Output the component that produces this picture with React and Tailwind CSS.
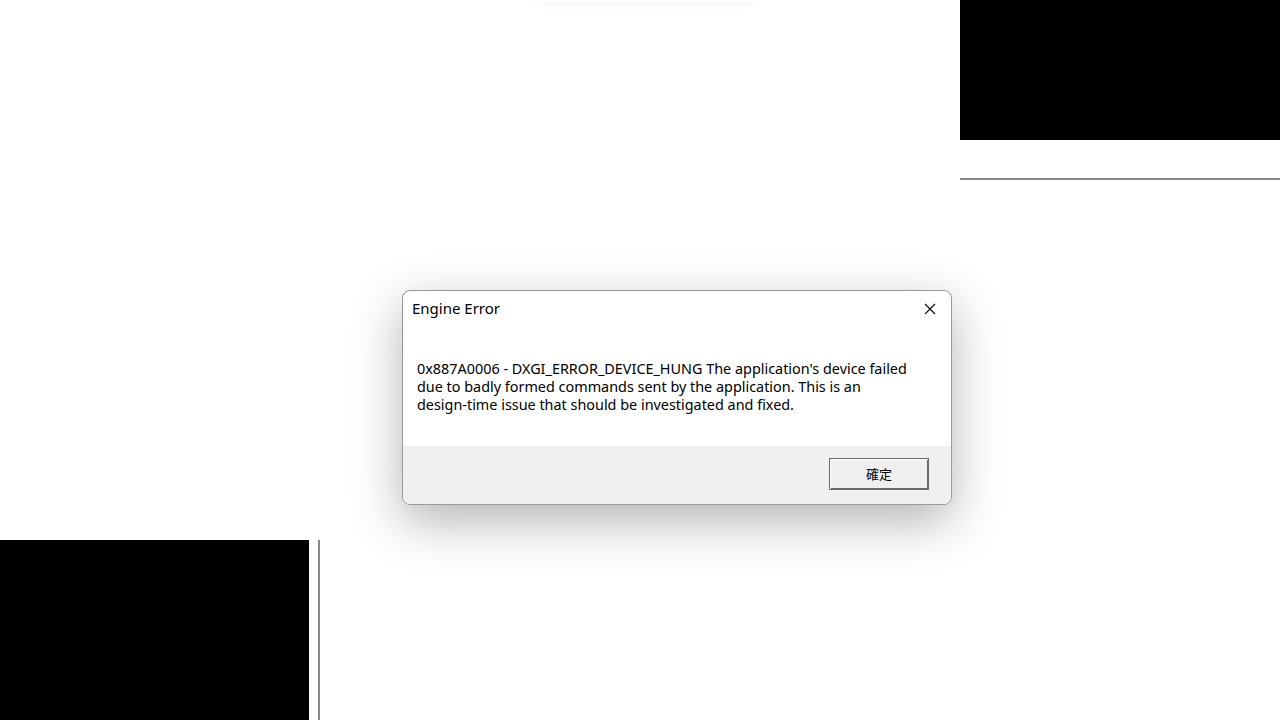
export default function App() {
  const font = { fontFamily: '"Noto Sans", "Noto Sans CJK TC", sans-serif' };

  return (
    <div className="relative w-[1280px] h-[720px] overflow-hidden bg-white" style={font}>
      {/* faint shadow of a window at the top edge */}
      <div className="absolute left-[540px] top-[-20px] w-[210px] h-[22px] bg-white shadow-[0_0_10px_rgba(0,0,0,0.08)]"></div>

      {/* top-right black panel and divider */}
      <div className="absolute right-0 top-0 w-[320px] flex flex-col">
        <div className="h-[140px] bg-black"></div>
        <div className="h-[38px]"></div>
        <div className="h-[2px] bg-[#8a8a8a]"></div>
      </div>

      {/* bottom-left black panel and divider */}
      <div className="absolute left-0 top-[540px] h-[180px] flex">
        <div className="w-[309px] bg-black"></div>
        <div className="w-[9px]"></div>
        <div className="w-[2px] bg-[#8a8a8a]"></div>
      </div>

      {/* dialog */}
      <div className="absolute left-[402px] top-[290px] w-[550px] h-[215px] flex flex-col rounded-[8px] border border-[#9a9a9a] bg-white overflow-hidden shadow-[0_16px_50px_rgba(0,0,0,0.3)]">
        <div className="h-[36px] flex items-center justify-between pl-[9px] pr-[14px] shrink-0">
          <span className="text-[15px] text-black leading-none mt-[-2px]">Engine Error</span>
          <svg width="14" height="14" viewBox="0 0 14 14" className="mt-[-1px]">
            <path d="M2 2 L12 12 M12 2 L2 12" stroke="#111" strokeWidth="1.2" fill="none" />
          </svg>
        </div>
        <div className="flex-1 px-[14px] pt-[33px]">
          <p className="text-[14.4px] leading-[18px] text-black whitespace-nowrap">
            0x887A0006 - DXGI_ERROR_DEVICE_HUNG The application's device failed
            <br />
            due to badly formed commands sent by the application. This is an
            <br />
            design-time issue that should be investigated and fixed.
          </p>
        </div>
        <div className="h-[58px] shrink-0 bg-[#f0f0f0] flex justify-end items-start pt-[12px] pr-[22px]">
          <button className="w-[100px] h-[32px] border border-[#6a6a6a] bg-[#efefef] shadow-[inset_1px_1px_0_#ffffff,inset_-1px_-1px_0_#6a6a6a] text-[13px] text-black flex items-center justify-center" style={{ fontFamily: '"Noto Sans CJK TC", sans-serif' }}>
            確定
          </button>
        </div>
      </div>
    </div>
  );
}
